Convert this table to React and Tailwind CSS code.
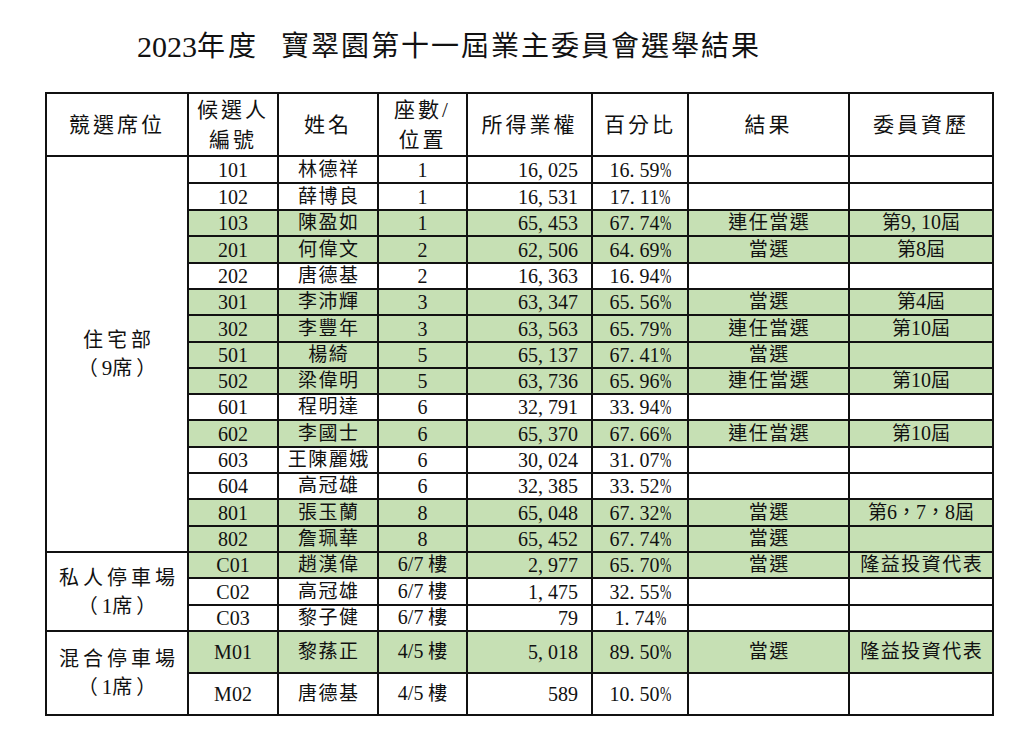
import React from "react";

const GREEN = "bg-[#c6e0b4]";

const rows = [
  { id: "101", name: "林德祥", seat: "1", votes: "16,025", pct: "16.59%" },
  { id: "102", name: "薛博良", seat: "1", votes: "16,531", pct: "17.11%" },
  { id: "103", name: "陳盈如", seat: "1", votes: "65,453", pct: "67.74%", result: "連任當選", hist: ["第", "9,10", "屆"], g: true },
  { id: "201", name: "何偉文", seat: "2", votes: "62,506", pct: "64.69%", result: "當選", hist: ["第", "8", "屆"], g: true },
  { id: "202", name: "唐德基", seat: "2", votes: "16,363", pct: "16.94%" },
  { id: "301", name: "李沛輝", seat: "3", votes: "63,347", pct: "65.56%", result: "當選", hist: ["第", "4", "屆"], g: true },
  { id: "302", name: "李豐年", seat: "3", votes: "63,563", pct: "65.79%", result: "連任當選", hist: ["第", "10", "屆"], g: true },
  { id: "501", name: "楊綺", seat: "5", votes: "65,137", pct: "67.41%", result: "當選", g: true },
  { id: "502", name: "梁偉明", seat: "5", votes: "63,736", pct: "65.96%", result: "連任當選", hist: ["第", "10", "屆"], g: true },
  { id: "601", name: "程明達", seat: "6", votes: "32,791", pct: "33.94%" },
  { id: "602", name: "李國士", seat: "6", votes: "65,370", pct: "67.66%", result: "連任當選", hist: ["第", "10", "屆"], g: true },
  { id: "603", name: "王陳麗娥", seat: "6", votes: "30,024", pct: "31.07%" },
  { id: "604", name: "高冠雄", seat: "6", votes: "32,385", pct: "33.52%" },
  { id: "801", name: "張玉蘭", seat: "8", votes: "65,048", pct: "67.32%", result: "當選", hist: ["第", "6，7，8", "屆"], g: true },
  { id: "802", name: "詹珮華", seat: "8", votes: "65,452", pct: "67.74%", result: "當選", g: true },
  { id: "C01", name: "趙漢偉", seat: "6/7 樓", votes: "2,977", pct: "65.70%", result: "當選", histText: "隆益投資代表", g: true },
  { id: "C02", name: "高冠雄", seat: "6/7 樓", votes: "1,475", pct: "32.55%" },
  { id: "C03", name: "黎子健", seat: "6/7 樓", votes: "79", pct: "1.74%" },
  { id: "M01", name: "黎蓀正", seat: "4/5 樓", votes: "5,018", pct: "89.50%", result: "當選", histText: "隆益投資代表", g: true },
  { id: "M02", name: "唐德基", seat: "4/5 樓", votes: "589", pct: "10.50%" },
];

const sections = [
  { start: 0, span: "row-span-15", l1: "住宅部", l2: "9席" },
  { start: 15, span: "row-span-3", l1: "私人停車場", l2: "1席" },
  { start: 18, span: "row-span-2", l1: "混合停車場", l2: "1席" },
];

function Num({ v }) {
  return (
    <span className="whitespace-nowrap">
      {v.split("").map((c, i) => {
        if (c === "," || c === ".")
          return (
            <span key={i} className="inline-block w-[10px] text-left">
              {c}
            </span>
          );
        if (c === "%")
          return (
            <span key={i} className="inline-block w-[11px] text-left">
              <span className="inline-block origin-left scale-x-[0.68]">%</span>
            </span>
          );
        if (c === "，")
          return (
            <span key={i} className="text-[19px]">
              {c}
            </span>
          );
        return <span key={i}>{c}</span>;
      })}
    </span>
  );
}

const cjk = "text-[19px] tracking-[1.5px]";

function Cell({ g, className = "", children }) {
  return (
    <div
      className={`${g ? GREEN : "bg-white"} flex items-center leading-[24px] whitespace-nowrap ${className}`}
    >
      {children}
    </div>
  );
}

function Seat({ v }) {
  const parts = v.split(" ");
  if (parts.length === 1) return <span className="text-[20px]">{v}</span>;
  return (
    <span>
      <span className="text-[20px]">{parts[0]}</span>
      <span className="text-[19px]"> {parts[1]}</span>
    </span>
  );
}

export default function App() {
  const hdr = "bg-white flex items-center justify-center text-center text-[21px] tracking-[3px] leading-[30px]";
  return (
    <div className="w-[1024px] h-[746px] bg-white text-[#111] font-['Liberation_Serif','Noto_Sans_CJK_TC',serif]">
      <div className="mt-[27px] h-[40px] pl-[137px] flex items-center whitespace-nowrap">
        <span className="text-[30px] leading-none">2023</span>
        <span className="text-[28px] tracking-[3px] leading-none">年度</span>
        <span className="ml-[22px] text-[28px] tracking-[2px] leading-none">
          寶翠園第十一屆業主委員會選舉結果
        </span>
      </div>

      <div className="ml-[45px] mt-[25px] w-[949px] grid grid-cols-[140px_88px_98px_87px_123px_94px_159px_142px] grid-rows-[61px_25px_25px_24px_25px_24px_24px_25px_24px_24px_24px_25px_24px_24px_25px_24px_24px_25px_24px_40px_40px] gap-[2px] p-[2px] bg-[#111]">
        <div className={hdr}>競選席位</div>
        <div className={hdr}>
          候選人
          <br />
          編號
        </div>
        <div className={hdr}>姓名</div>
        <div className={hdr}>
          座數/
          <br />
          位置
        </div>
        <div className={hdr}>所得業權</div>
        <div className={hdr}>百分比</div>
        <div className={hdr}>結果</div>
        <div className={hdr}>委員資歷</div>

        {rows.map((r, i) => {
          const sec = sections.find((s) => s.start === i);
          return (
            <React.Fragment key={r.id}>
              {sec && (
                <div
                  className={`${sec.span} bg-white flex flex-col items-center justify-center text-[20px] tracking-[4px] leading-[28px]`}
                >
                  <div className="pl-[4px]">{sec.l1}</div>
                  <div className="pl-[4px]">
                    （<span className="tracking-normal text-[21px]">{sec.l2.slice(0, 1)}</span>
                    {sec.l2.slice(1)}）
                  </div>
                </div>
              )}
              <Cell g={r.g} className="justify-center text-[20px]">
                {r.id}
              </Cell>
              <Cell g={r.g} className={`justify-center ${cjk} pl-[1.5px]`}>
                {r.name}
              </Cell>
              <Cell g={r.g} className="justify-center">
                <Seat v={r.seat} />
              </Cell>
              <Cell g={r.g} className="justify-end pr-[13px] text-[20px]">
                <Num v={r.votes} />
              </Cell>
              <Cell g={r.g} className="justify-center text-[20px]">
                <Num v={r.pct} />
              </Cell>
              <Cell g={r.g} className={`justify-center ${cjk} pl-[1.5px]`}>
                {r.result || ""}
              </Cell>
              <Cell g={r.g} className="justify-center">
                {r.hist ? (
                  <span>
                    <span className="text-[19px]">{r.hist[0]}</span>
                    <span className="text-[20px]">
                      <Num v={r.hist[1]} />
                    </span>
                    <span className="text-[19px]">{r.hist[2]}</span>
                  </span>
                ) : r.histText ? (
                  <span className={`${cjk} pl-[1.5px]`}>{r.histText}</span>
                ) : null}
              </Cell>
            </React.Fragment>
          );
        })}
      </div>
    </div>
  );
}
